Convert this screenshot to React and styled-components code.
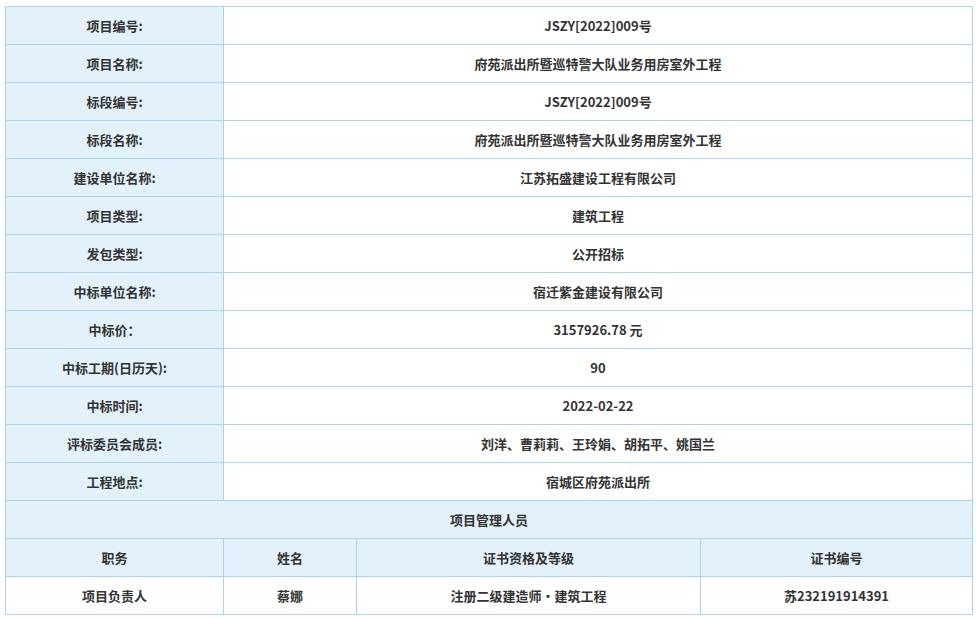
import React from "react";
import styled, { createGlobalStyle } from "styled-components";

const Global = createGlobalStyle`
  body { margin: 0; background: #fff; font-family: "Noto Sans CJK SC", "Noto Sans", sans-serif; }
`;

const Wrap = styled.div`
  padding: 6px 6px 0 5px;
`;

const Table = styled.table`
  width: 967px;
  border-collapse: collapse;
  table-layout: fixed;
`;

const Cell = styled.td`
  height: 37px;
  padding: 0;
  border: 1px solid #a9d5ea;
  background: ${(p) => (p.$head ? "#e3f1fa" : "#fff")};
  color: #333;
  font-size: 13px;
  font-weight: bold;
  text-align: center;
`;

const rows = [
  ["项目编号:", "JSZY[2022]009号"],
  ["项目名称:", "府苑派出所暨巡特警大队业务用房室外工程"],
  ["标段编号:", "JSZY[2022]009号"],
  ["标段名称:", "府苑派出所暨巡特警大队业务用房室外工程"],
  ["建设单位名称:", "江苏拓盛建设工程有限公司"],
  ["项目类型:", "建筑工程"],
  ["发包类型:", "公开招标"],
  ["中标单位名称:", "宿迁紫金建设有限公司"],
  ["中标价：", "3157926.78 元"],
  ["中标工期(日历天):", "90"],
  ["中标时间:", "2022-02-22"],
  ["评标委员会成员:", "刘洋、曹莉莉、王玲娟、胡拓平、姚国兰"],
  ["工程地点:", "宿城区府苑派出所"],
];

export default function App() {
  return (
    <Wrap>
      <Global />
      <Table>
        <colgroup>
          <col style={{ width: 218 }} />
          <col style={{ width: 133 }} />
          <col style={{ width: 344 }} />
          <col style={{ width: 272 }} />
        </colgroup>
        <tbody>
          {rows.map(([k, v]) => (
            <tr key={k}>
              <Cell $head>{k}</Cell>
              <Cell colSpan={3}>{v}</Cell>
            </tr>
          ))}
          <tr>
            <Cell $head colSpan={4}>项目管理人员</Cell>
          </tr>
          <tr>
            <Cell $head>职务</Cell>
            <Cell $head>姓名</Cell>
            <Cell $head>证书资格及等级</Cell>
            <Cell $head>证书编号</Cell>
          </tr>
          <tr>
            <Cell>项目负责人</Cell>
            <Cell>蔡娜</Cell>
            <Cell>注册二级建造师•建筑工程</Cell>
            <Cell>苏232191914391</Cell>
          </tr>
        </tbody>
      </Table>
    </Wrap>
  );
}
